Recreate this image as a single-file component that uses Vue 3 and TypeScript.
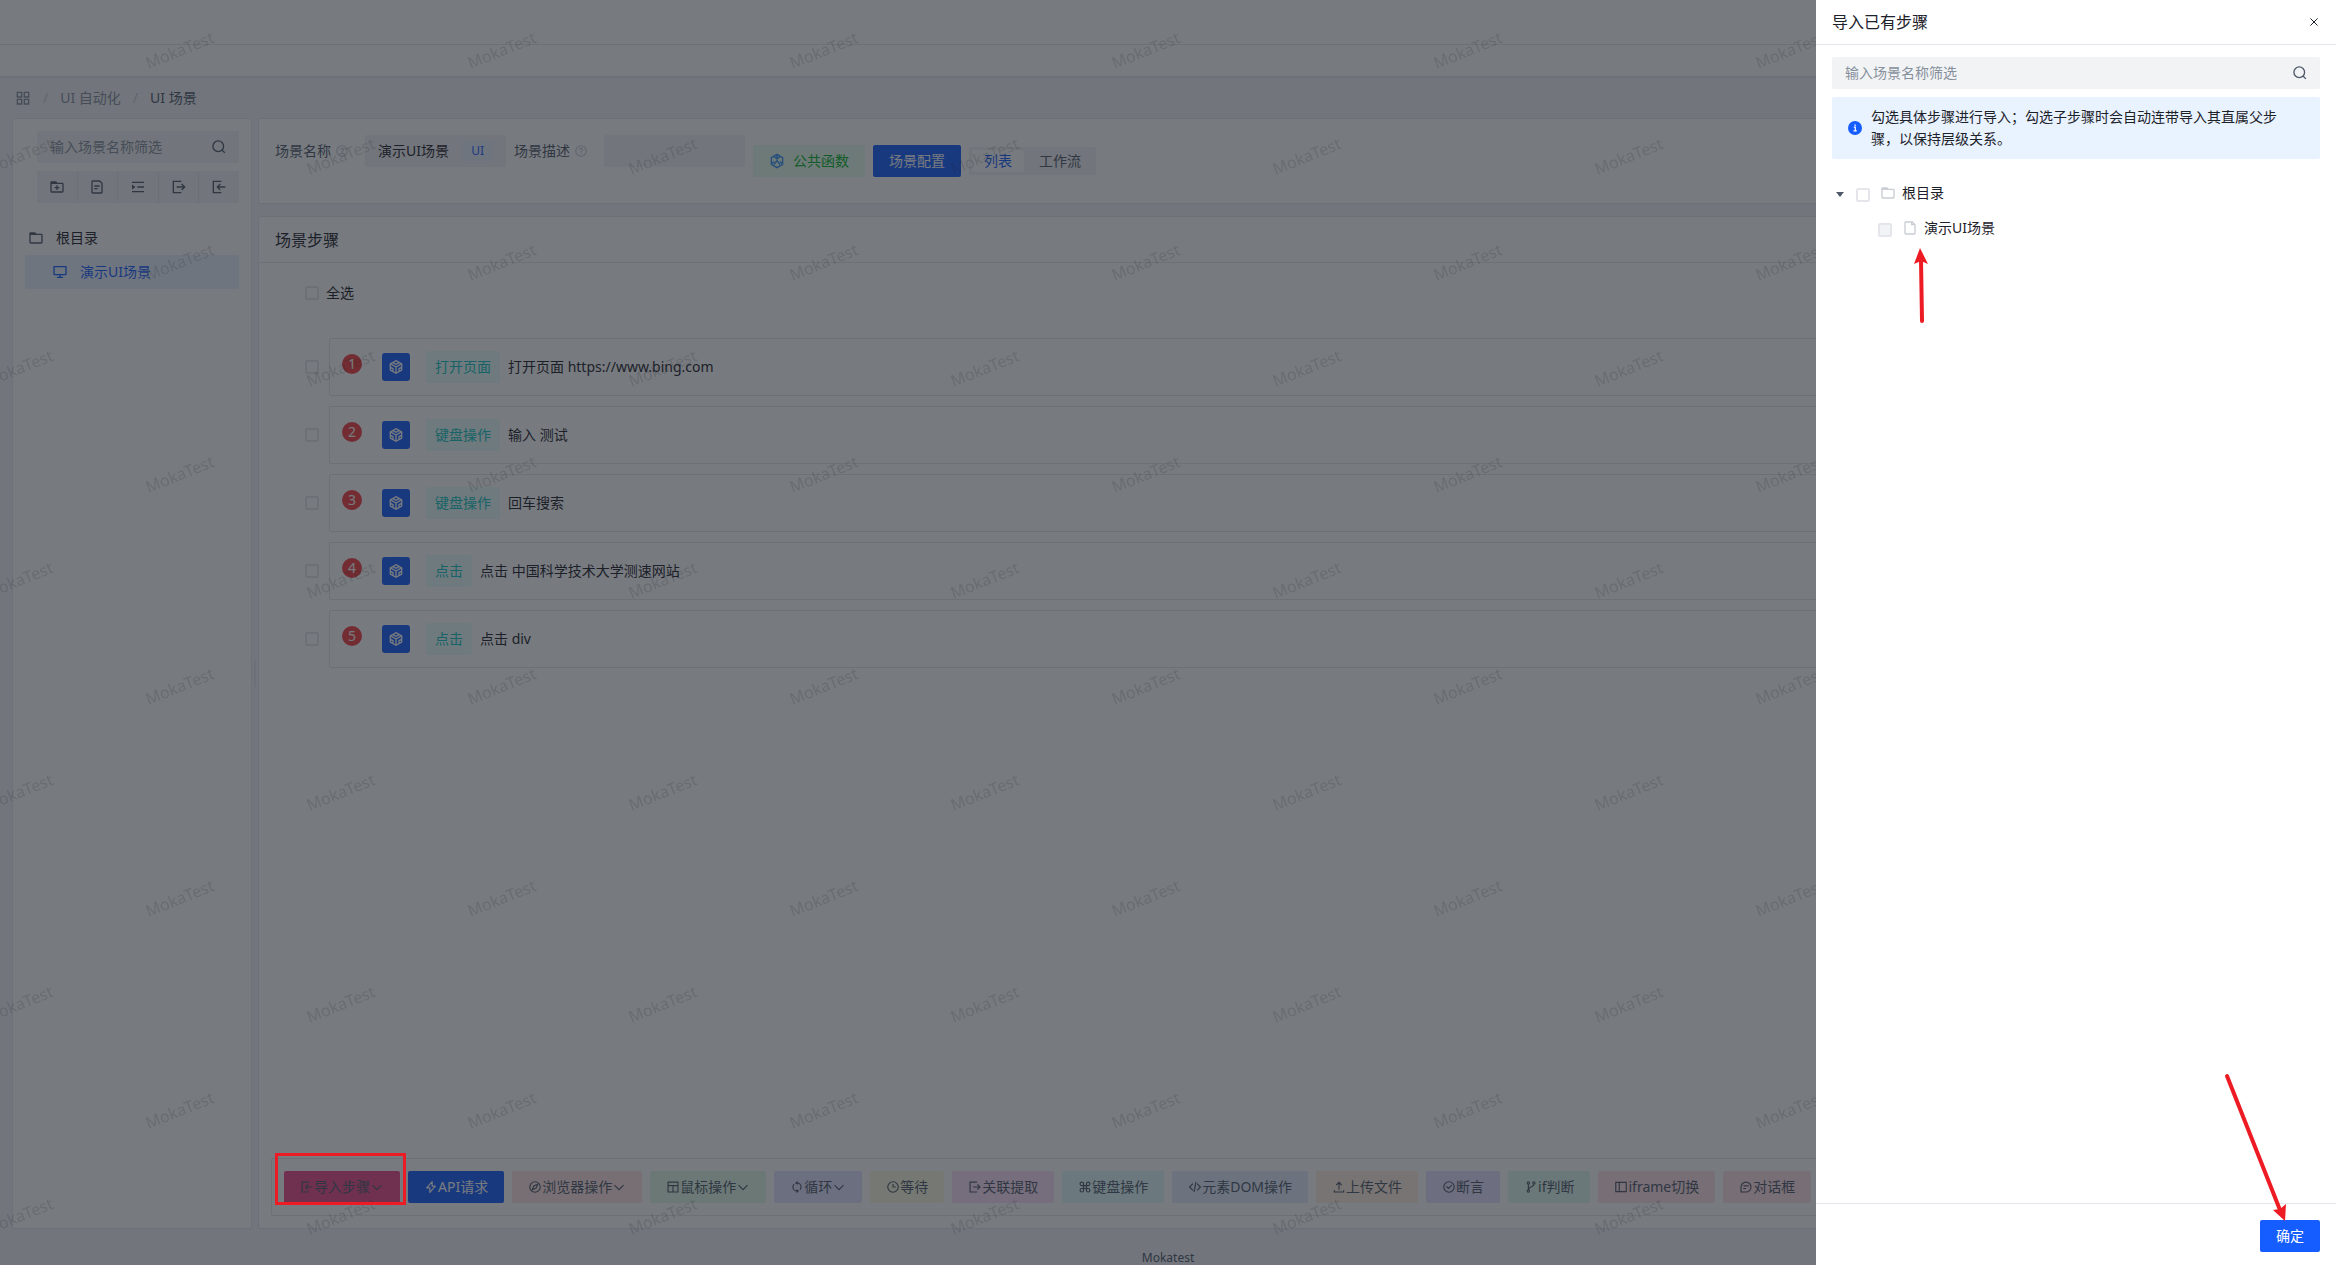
<script setup lang="ts">
import { ref } from 'vue'

interface Step { id: number; kind: string; text: string }
interface Tool { name: string; label: string; icon: string; menu?: boolean }

const ring = 'M42 24c0 9.941-8.059 18-18 18S6 33.941 6 24 14.059 6 24 6s18 8.059 18 18Z'
const folder = 'M6 13h18l-2.5-3.6a1 1 0 0 0-.9-.4H7a1 1 0 0 0-1 1v3Zm0 0h34a2 2 0 0 1 2 2v22a2 2 0 0 1-2 2H8a2 2 0 0 1-2-2V13Z'

const icons: Record<string, string> = {
  apps: 'M7 7h13v14H7zM28 7h13v14H28zM7 28h13v14H7zM28 28h13v14H28z',
  search: 'M33.072 33.071c6.248-6.248 6.248-16.379 0-22.627-6.249-6.249-16.38-6.249-22.628 0-6.248 6.248-6.248 16.379 0 22.627 6.248 6.248 16.38 6.248 22.628 0Zm0 0 8.485 8.485',
  folder,
  folderAdd: folder + 'M24 19v14m-7-7h14',
  file: 'M16 21h16m-16 8h10m11 13H11a2 2 0 0 1-2-2V8a2 2 0 0 1 2-2h21l7 7v27a2 2 0 0 1-2 2Z',
  page: 'M29 6v8h9M11 42h26a2 2 0 0 0 2-2V14l-8-8H11a2 2 0 0 0-2 2v32a2 2 0 0 0 2 2Z',
  unfold: 'M6 10h36M22 24h20M6 38h36M8 20.5l5 3.5-5 3.5v-7Z',
  export: 'M31.928 33.072 41 24.002l-9.072-9.072M16.858 24h24.09M31 41H7V7h24',
  import: 'm27.929 33.072-9.071-9.07 9.07-9.072M43 24H19m12 17H7V7h24',
  desktop: 'M24 32v8m0 0h-9m9 0h9M7 32h34a1 1 0 0 0 1-1V9a1 1 0 0 0-1-1H7a1 1 0 0 0-1 1v22a1 1 0 0 0 1 1Z',
  question: ring + 'M24 31v4m0-6 0-1c0-3 3-4 4.8-6.4C30.6 19.2 28.3 15 24 15c-4 0-5.4 2.5-5.4 4.5v.5',
  thunder: 'M27.824 5.203A.1.1 0 0 1 28 5.27V21h10.782a.1.1 0 0 1 .075.165L20.176 42.73A.1.1 0 0 1 20 42.663V27H9.219a.1.1 0 0 1-.076-.165L27.824 5.203Z',
  compass: ring + 'M33 15l-5 13-13 5 5-13 13-5Z',
  layout: 'M7 7h34v34H7zM7 19h34M24 19v22',
  loop: 'M24 38c-7.732 0-14-6.268-14-14 0-3.815 1.526-7.273 4-9.798M24 10c7.732 0 14 6.268 14 14 0 3.815-1.526 7.273-4 9.798M24 7v6l-4-3 4-3Zm0 34v-6l4 3-4 3Z',
  clock: ring + 'M24 14v10h9.5',
  command: 'M29 19v-6a6 6 0 1 1 6 6h-6Zm0 0v10m0-10H19m10 10v6a6 6 0 1 0 6-6h-6Zm0 0H19m0-10v10m0-10v-6a6 6 0 1 0-6 6h6Zm0 10v6a6 6 0 1 1-6-6h6Z',
  code: 'M16.734 12.686 5.42 24l11.314 11.314m14.521-22.628L42.57 24 31.255 35.314M27.2 6.28l-6.251 35.453',
  upload: 'M14.93 17.071 24 8l9.071 9.071m-9.07 16.071v-25M40 35v6H8v-6',
  check: ring + 'M15 22l7 7 11.5-11.5',
  branch: 'M19 10a4 4 0 1 1-8 0 4 4 0 0 1 8 0ZM38 10a4 4 0 1 1-8 0 4 4 0 0 1 8 0ZM19 38a4 4 0 1 1-8 0 4 4 0 0 1 8 0ZM15 15v18M34 15c0 9-19 7-19 18',
  frame: 'M6 8h36v32H6zM18 8v32',
  message: 'M15 20h18m-18 9h9M7 41h17.63C33.67 41 41 33.67 41 24.63V24c0-9.389-7.611-17-17-17S7 14.611 7 24v17Z',
  down: 'M39.6 17.443 24.043 33 8.487 17.443',
  close: 'M9.857 9.858 24 24m0 0 14.142 14.142M24 24 38.142 9.858M24 24 9.857 38.142',
  cube: 'M24 5l17 9.5v19L24 43 7 33.500v-19L24 5ZM24 24v18M24 24 9 15.500M24 24l15-8.500M15 11l9 5 9-5M8 25l7 4v8M40 25l-7 4v8',
  hex: 'M24 4l17 10v20L24 44 7 34V14L24 4ZM24 6v17M24 23 15 35M24 23l9 12M8 31l8-5M40 31l-8-5M15 11l9 6 9-6',
}

const treeActions = [
  { icon: 'folderAdd', label: '新建目录' },
  { icon: 'file', label: '新建场景' },
  { icon: 'unfold', label: '展开' },
  { icon: 'export', label: '导出' },
  { icon: 'import', label: '导入' },
]

const steps: Step[] = [
  { id: 1, kind: '打开页面', text: '打开页面 https://www.bing.com' },
  { id: 2, kind: '键盘操作', text: '输入 测试' },
  { id: 3, kind: '键盘操作', text: '回车搜索' },
  { id: 4, kind: '点击', text: '点击 中国科学技术大学测速网站' },
  { id: 5, kind: '点击', text: '点击 div' },
]

const tools: Tool[] = [
  { name: 'import', label: '导入步骤', icon: 'import', menu: true },
  { name: 'api', label: 'API请求', icon: 'thunder' },
  { name: 'browser', label: '浏览器操作', icon: 'compass', menu: true },
  { name: 'mouse', label: '鼠标操作', icon: 'layout', menu: true },
  { name: 'loop', label: '循环', icon: 'loop', menu: true },
  { name: 'wait', label: '等待', icon: 'clock' },
  { name: 'extract', label: '关联提取', icon: 'export' },
  { name: 'keyboard', label: '键盘操作', icon: 'command' },
  { name: 'dom', label: '元素DOM操作', icon: 'code' },
  { name: 'upload', label: '上传文件', icon: 'upload' },
  { name: 'assert', label: '断言', icon: 'check' },
  { name: 'branch', label: 'if判断', icon: 'branch' },
  { name: 'frame', label: 'iframe切换', icon: 'frame' },
  { name: 'dialog', label: '对话框', icon: 'message' },
]

const treeFilter = ref('')
const importFilter = ref('')
const sceneName = ref('演示UI场景')
const sceneDesc = ref('')
const view = ref('list')
</script>

<template>
  <div class="app">
    <header class="topbar"></header>
    <div class="tabbar"></div>

    <nav class="breadcrumb" aria-label="面包屑">
      <svg class="icon" viewBox="0 0 48 48"><path :d="icons.apps" /></svg>
      <span class="slash">/</span>
      <a href="#ui">UI 自动化</a>
      <span class="slash">/</span>
      <span class="current">UI 场景</span>
    </nav>

    <main class="workspace">
      <aside class="card sidebar">
        <div class="side-tools">
          <label class="search">
            <input v-model="treeFilter" type="text" placeholder="输入场景名称筛选" aria-label="输入场景名称筛选" />
            <svg class="icon" viewBox="0 0 48 48"><path :d="icons.search" /></svg>
          </label>
          <div class="button-group">
            <button v-for="a in treeActions" :key="a.icon" type="button" :aria-label="a.label">
              <svg class="icon" viewBox="0 0 48 48"><path :d="icons[a.icon]" /></svg>
            </button>
          </div>
        </div>
        <ul class="tree">
          <li>
            <svg class="icon" viewBox="0 0 48 48"><path :d="icons.folder" /></svg>
            <span>根目录</span>
          </li>
          <li class="leaf selected">
            <svg class="icon" viewBox="0 0 48 48"><path :d="icons.desktop" /></svg>
            <span>演示UI场景</span>
          </li>
        </ul>
      </aside>

      <div class="splitter"><i></i></div>

      <div class="content">
        <section class="card scene-form">
          <div class="field">
            <label for="scene-name">场景名称</label>
            <svg class="icon help" viewBox="0 0 48 48"><path :d="icons.question" /></svg>
            <div class="input">
              <input id="scene-name" v-model="sceneName" type="text" />
              <span class="ui-tag">UI</span>
            </div>
          </div>
          <div class="field">
            <label for="scene-desc">场景描述</label>
            <svg class="icon help" viewBox="0 0 48 48"><path :d="icons.question" /></svg>
            <div class="input"><input id="scene-desc" v-model="sceneDesc" type="text" /></div>
          </div>
          <button class="btn functions" type="button">
            <svg class="icon" viewBox="0 0 48 48"><path :d="icons.hex" /></svg>公共函数
          </button>
          <button class="btn primary" type="button">场景配置</button>
          <div class="radio-group">
            <label :class="{ on: view === 'list' }"><input v-model="view" type="radio" name="view" value="list" />列表</label>
            <label :class="{ on: view === 'flow' }"><input v-model="view" type="radio" name="view" value="flow" />工作流</label>
          </div>
        </section>

        <section class="card steps-card">
          <h2>场景步骤</h2>
          <div class="steps">
            <label class="select-all"><input class="check" type="checkbox" />全选</label>
            <ol>
              <li v-for="s in steps" :key="s.id">
                <input class="check" type="checkbox" :aria-label="s.text" />
                <div class="step">
                  <span class="badge">{{ s.id }}</span>
                  <span class="step-icon"><svg class="icon" viewBox="0 0 48 48"><path :d="icons.cube" /></svg></span>
                  <span class="kind">{{ s.kind }}</span>
                  <span>{{ s.text }}</span>
                </div>
              </li>
            </ol>
          </div>
          <div class="toolbar">
            <button v-for="t in tools" :key="t.name" class="btn" :class="t.name" type="button">
              <svg class="icon" viewBox="0 0 48 48"><path :d="icons[t.icon]" /></svg>{{ t.label }}<svg v-if="t.menu" class="icon" viewBox="0 0 48 48"><path :d="icons.down" /></svg>
            </button>
          </div>
        </section>
      </div>
    </main>

    <footer class="footer">Mokatest</footer>

    <svg class="watermark" aria-hidden="true">
      <defs>
        <pattern id="wm" width="322" height="212" patternUnits="userSpaceOnUse">
          <g text-anchor="middle">
            <text transform="translate(180 51) rotate(-22)" y="5">MokaTest</text>
            <text transform="translate(19 157) rotate(-22)" y="5">MokaTest</text>
            <text transform="translate(341 157) rotate(-22)" y="5">MokaTest</text>
          </g>
        </pattern>
      </defs>
      <rect width="100%" height="100%" fill="url(#wm)" />
    </svg>

    <div class="mask"></div>

    <div class="drawer" role="dialog" aria-label="导入已有步骤">
      <header>
        <h1>导入已有步骤</h1>
        <button type="button" aria-label="关闭"><svg class="icon" viewBox="0 0 48 48"><path :d="icons.close" /></svg></button>
      </header>
      <div class="drawer-body">
        <label class="search">
          <input v-model="importFilter" type="text" placeholder="输入场景名称筛选" aria-label="输入场景名称筛选" />
          <svg class="icon" viewBox="0 0 48 48"><path :d="icons.search" /></svg>
        </label>
        <div class="alert">
          <svg viewBox="0 0 48 48"><circle cx="24" cy="24" r="24" fill="#165dff" /><path d="M20 21h5v12M19 34h11M22 14h5" fill="none" stroke="#fff" stroke-width="4" /></svg>
          <p>勾选具体步骤进行导入；勾选子步骤时会自动连带导入其直属父步骤，以保持层级关系。</p>
        </div>
        <ul class="import-tree">
          <li>
            <svg class="caret" viewBox="0 0 8 6"><path d="M0 0h8L4 5z" /></svg>
            <input id="node-root" class="check" type="checkbox" />
            <svg class="icon" viewBox="0 0 48 48"><path :d="icons.folder" /></svg>
            <label for="node-root">根目录</label>
          </li>
          <li class="leaf">
            <input id="node-demo" class="check" type="checkbox" disabled />
            <svg class="icon" viewBox="0 0 48 48"><path :d="icons.page" /></svg>
            <label for="node-demo">演示UI场景</label>
          </li>
        </ul>
      </div>
      <footer><button class="btn primary" type="button">确定</button></footer>

      <svg class="arrow-up" viewBox="0 0 16 76"><path d="M9 73 8 12" /><polygon points="7,0 15,16 8,13 1,16" /></svg>
      <svg class="arrow-down" viewBox="0 0 66 150"><path d="M4 4 57 138" /><polygon points="62,149 63,132 57,137 50,138" /></svg>
    </div>

    <div class="highlight"></div>
  </div>
</template>

<style>
body { margin: 0; background: #f2f3f8; }
</style>

<style scoped>
* { box-sizing: border-box; }
.app {
  display: flex;
  flex-direction: column;
  min-height: 100vh;
  overflow: hidden;
  background: #f2f3f8;
  color: #1d2129;
  font: 14px/22px "Noto Sans", "Noto Sans CJK SC", sans-serif;
}
button, input { margin: 0; font: inherit; color: inherit; }
button { padding: 0; border: 0; background: none; white-space: nowrap; }
ul, ol { margin: 0; padding: 0; list-style: none; }
h1, h2 { margin: 0; font-size: 16px; font-weight: 400; line-height: 24px; }
p { margin: 0; }
.icon { flex: none; width: 16px; height: 16px; fill: none; stroke: currentColor; stroke-width: 4; }

.topbar { height: 45px; background: #fff; border-bottom: 1px solid #e5e6eb; }
.tabbar { height: 33px; background: #fff; border-bottom: 2px solid #e5e6eb; }
.breadcrumb { display: flex; align-items: center; gap: 12px; height: 40px; padding: 0 15px; color: #86909c; }
.breadcrumb a { color: inherit; text-decoration: none; }
.breadcrumb .slash { color: #c9cdd4; }
.breadcrumb .current { color: #4e5969; }

.workspace { display: flex; flex: 1; padding: 0 12px; }
.card { background: #fff; border: 1px solid #e5e6eb; border-radius: 2px; }
.sidebar { flex: none; width: 240px; padding: 12px; }
.side-tools { display: flex; flex-direction: column; gap: 8px; padding-left: 12px; }
.search { display: flex; align-items: center; height: 32px; padding: 0 12px 0 13px; background: #f2f3f5; border-radius: 2px; color: #4e5969; }
.search input { flex: 1; min-width: 0; padding: 0; border: 0; outline: 0; background: none; }
.search input::placeholder { color: #86909c; opacity: 1; }
.button-group { display: flex; gap: 1px; height: 32px; background: #e5e6eb; }
.button-group button { flex: 1; display: flex; align-items: center; justify-content: center; background: #f2f3f5; color: #4e5969; }
.tree { margin-top: 18px; }
.tree li { display: flex; align-items: center; gap: 12px; height: 34px; padding-left: 3px; border-radius: 2px; }
.tree .icon { color: #4e5969; }
.tree .leaf { padding-left: 27px; }
.tree .selected { background: #e8f3ff; }
.tree .selected, .tree .selected .icon { color: #165dff; }

.splitter { display: flex; flex: none; align-items: center; justify-content: center; width: 6px; }
.splitter i { width: 2px; height: 26px; background: #e5e6eb; }
.content { display: flex; flex: 1; flex-direction: column; gap: 12px; min-width: 0; }

.scene-form { display: flex; align-items: center; gap: 8px; padding: 16px; }
.field { display: flex; align-items: center; margin-bottom: 20px; color: #4e5969; }
.help { width: 14px; height: 14px; margin: 0 16px 0 4px; color: #c9cdd4; }
.input { display: flex; align-items: center; width: 141px; height: 32px; padding: 0 13px; background: #f2f3f5; border-radius: 2px; color: #1d2129; }
.input input { flex: 1; min-width: 0; padding: 0; border: 0; outline: 0; background: none; }
.ui-tag { height: 20px; padding: 0 9px; background: #e8f3ff; color: #165dff; font-size: 12px; line-height: 20px; }

.btn { display: flex; align-items: center; height: 32px; padding: 0 16px; border-radius: 2px; }
.primary { background: #165dff; color: #fff; }
.functions { background: #e8ffea; color: #00b42a; }
.functions .icon { margin-right: 8px; color: #3491fa; }
.radio-group { display: flex; gap: 3px; padding: 3px; background: #f2f3f5; border-radius: 2px; color: #4e5969; }
.radio-group label { padding: 0 12px; border-radius: 2px; }
.radio-group input { position: absolute; opacity: 0; pointer-events: none; }
.radio-group .on { background: #fff; color: #165dff; }

.steps-card { display: flex; flex: 1; flex-direction: column; }
.steps-card h2 { height: 46px; padding: 0 16px; border-bottom: 1px solid #e5e6eb; line-height: 46px; }
.steps { flex: 1; padding: 19px 16px 0 46px; }
.select-all { display: flex; align-items: center; gap: 7px; margin-bottom: 34px; }
.check { appearance: none; flex: none; width: 14px; height: 14px; border: 2px solid #e5e6eb; border-radius: 2px; background: #fff; }
.check:disabled { background: #f2f3f5; }
.steps li { display: flex; align-items: center; gap: 10px; margin-bottom: 10px; }
.step { display: flex; flex: 1; align-items: center; height: 58px; padding: 0 12px; border: 1px solid #e5e6eb; border-radius: 2px; }
.badge { width: 20px; height: 20px; margin: 0 20px 6px 0; border-radius: 50%; background: #f53f3f; color: #fff; font-size: 14px; line-height: 20px; text-align: center; }
.step-icon { display: flex; align-items: center; justify-content: center; width: 28px; height: 28px; margin-right: 16px; border-radius: 3px; background: #165dff; color: #fff; }
.kind { height: 32px; margin-right: 8px; padding: 0 9px; border-radius: 2px; background: #e8fffb; color: #0fc6c2; line-height: 32px; }

.toolbar { display: flex; gap: 8px; margin: 12px; padding: 12px; overflow: hidden; border: 1px solid #e5e6eb; border-radius: 2px; color: #4e5969; }
.toolbar .btn { flex: none; }
.toolbar .icon { width: 14px; height: 14px; }
.import { background: #ed4689; }
.api { background: #165dff; color: #fff; }
.browser { background: #ffe4e4; }
.mouse { background: #e0fae8; }
.loop { background: #e4e4ff; }
.wait { background: #fafae0; }
.extract { background: #ffe0fa; }
.keyboard { background: #e0fafa; }
.dom { background: #e4eeff; }
.upload { background: #fff0e0; }
.assert { background: #e6e0ff; }
.branch { background: #e0faf0; }
.frame, .dialog { background: #ffe0e8; }

.footer { height: 36px; padding-top: 22px; color: #4e5969; font-size: 12px; line-height: 14px; text-align: center; }

.watermark { position: fixed; inset: 0; width: 100%; height: 100%; pointer-events: none; }
.watermark text { font-size: 16px; fill: rgba(0, 0, 0, 0.15); }
.mask { position: fixed; inset: 0; background: rgba(29, 33, 41, 0.6); }

.drawer { position: fixed; top: 0; right: 0; bottom: 0; display: flex; flex-direction: column; width: 520px; background: #fff; }
.drawer header { display: flex; align-items: center; justify-content: space-between; height: 45px; padding: 0 16px; border-bottom: 1px solid #e5e6eb; }
.drawer header button { display: flex; }
.drawer header .icon { width: 12px; height: 12px; }
.drawer-body { flex: 1; padding: 12px 16px; }
.alert { display: flex; align-items: center; gap: 9px; margin-top: 8px; padding: 9px 16px; border-radius: 2px; background: #e8f3ff; }
.alert svg { flex: none; width: 14px; height: 14px; }
.import-tree { margin-top: 16px; }
.import-tree li { display: flex; align-items: center; height: 35px; padding-left: 4px; }
.import-tree .leaf { padding-left: 46px; }
.import-tree .check { margin: 4px 10px 0 0; }
.import-tree .icon { margin-right: 6px; color: #c9cdd4; }
.caret { width: 8px; height: 6px; margin: 4px 12px 0 0; fill: #4e5969; }
.drawer footer { display: flex; justify-content: flex-end; padding: 16px 16px 13px; border-top: 1px solid #e5e6eb; }

.arrow-up, .arrow-down { position: absolute; fill: #ed1c24; stroke: none; }
.arrow-up path, .arrow-down path { fill: none; stroke: #ed1c24; stroke-width: 4; stroke-linecap: round; }
.arrow-up { top: 248px; left: 97px; width: 16px; height: 76px; }
.arrow-down { right: 47px; bottom: 43px; width: 66px; height: 150px; }
.highlight { position: fixed; left: 275px; bottom: 60px; width: 131px; height: 52px; border: 3px solid #ed1c24; }
</style>
